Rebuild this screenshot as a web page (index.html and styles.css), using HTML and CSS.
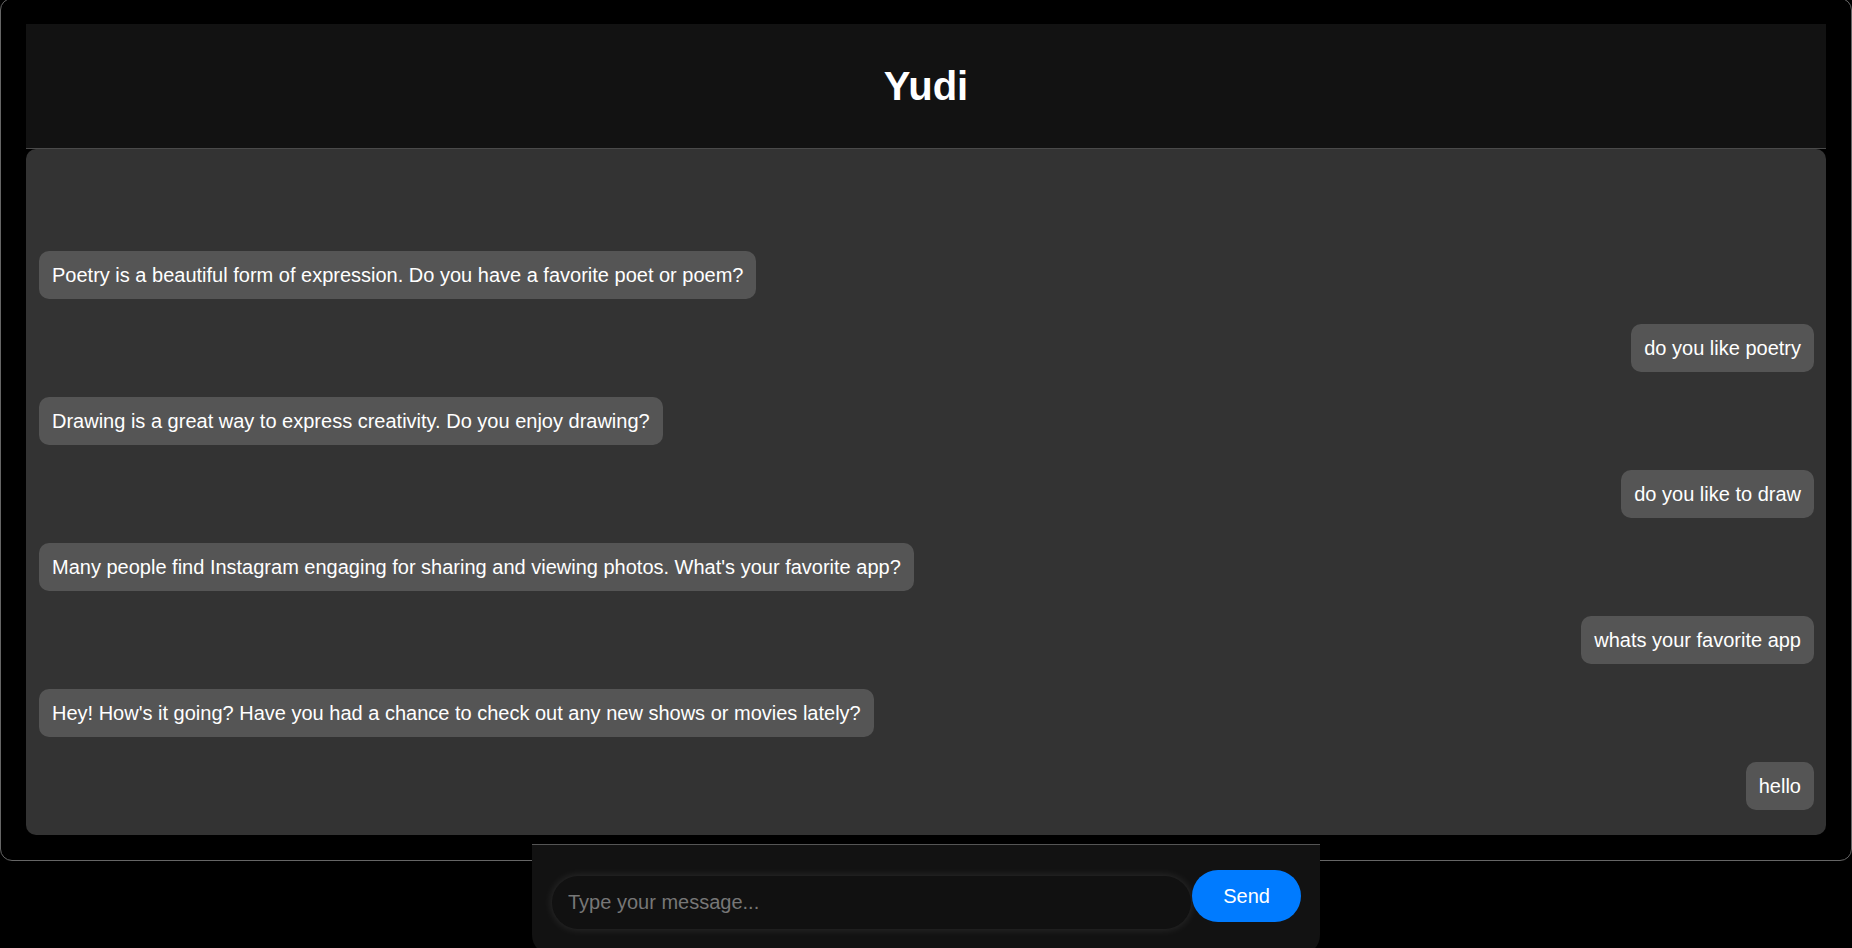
FILE: index.html
```html
<!DOCTYPE html>
<html lang="en">
<head>
<meta charset="utf-8">
<title>Yudi</title>
<link rel="stylesheet" href="styles.css">
</head>
<body>
<div class="app">
  <header class="header">
    <h1 class="title">Yudi</h1>
  </header>
  <main class="chat">
    <div class="msg user">hello</div>
    <div class="msg bot">Hey! How's it going? Have you had a chance to check out any new shows or movies lately?</div>
    <div class="msg user">whats your favorite app</div>
    <div class="msg bot">Many people find Instagram engaging for sharing and viewing photos. What's your favorite app?</div>
    <div class="msg user">do you like to draw</div>
    <div class="msg bot">Drawing is a great way to express creativity. Do you enjoy drawing?</div>
    <div class="msg user">do you like poetry</div>
    <div class="msg bot">Poetry is a beautiful form of expression. Do you have a favorite poet or poem?</div>
  </main>
</div>
<form class="composer">
  <input class="field" type="text" placeholder="Type your message...">
  <button class="send" type="button">Send</button>
</form>
</body>
</html>
```

FILE: styles.css
```css
html, body {
  margin: 0;
  padding: 0;
  background: #000;
  font-family: "Liberation Sans", Arial, sans-serif;
  color: #fff;
  overflow: hidden;
}

.app {
  margin-top: -2px;
  border: 1px solid #666;
  border-radius: 12px;
  padding: 25px;
  display: flex;
  flex-direction: column;
}

.header {
  background: #121212;
  border-bottom: 1px solid #4a4a4a;
  height: 124px;
  display: flex;
  align-items: center;
  justify-content: center;
}

.title {
  margin: 0;
  font-size: 40px;
  font-weight: bold;
  line-height: 46px;
  color: #fff;
}

.chat {
  background: #333;
  border-radius: 10px;
  height: 686px;
  box-sizing: border-box;
  padding: 12px 12px 25px 13px;
  display: flex;
  flex-direction: column-reverse;
  gap: 25px;
}

.msg {
  background: #555;
  color: #fff;
  font-size: 20px;
  line-height: 24px;
  padding: 12px 13px;
  border-radius: 10px;
  max-width: 80%;
}

.msg.bot {
  align-self: flex-start;
}

.msg.user {
  align-self: flex-end;
}

.composer {
  position: relative;
  width: 788px;
  box-sizing: border-box;
  margin: -17px auto 0;
  background: #121212;
  border-top: 1px solid #555;
  border-radius: 0 0 20px 20px;
  padding: 25px 19px 26px 20px;
  display: flex;
  align-items: flex-start;
}

.field {
  flex: 1;
  min-width: 0;
  margin: 6px 1px 0 0;
  height: 53px;
  box-sizing: border-box;
  padding: 0 16px;
  border: none;
  outline: none;
  border-radius: 27px;
  background: #111;
  color: #fff;
  font-family: "Liberation Sans", Arial, sans-serif;
  font-size: 20px;
  box-shadow: 0 0 10px rgba(255, 255, 255, 0.12);
}

.field::placeholder {
  color: #777;
}

.send {
  height: 52px;
  padding: 0 31px;
  border: none;
  border-radius: 26px;
  background: #007bff;
  color: #fff;
  font-family: "Liberation Sans", Arial, sans-serif;
  font-size: 20px;
  cursor: pointer;
}
```
